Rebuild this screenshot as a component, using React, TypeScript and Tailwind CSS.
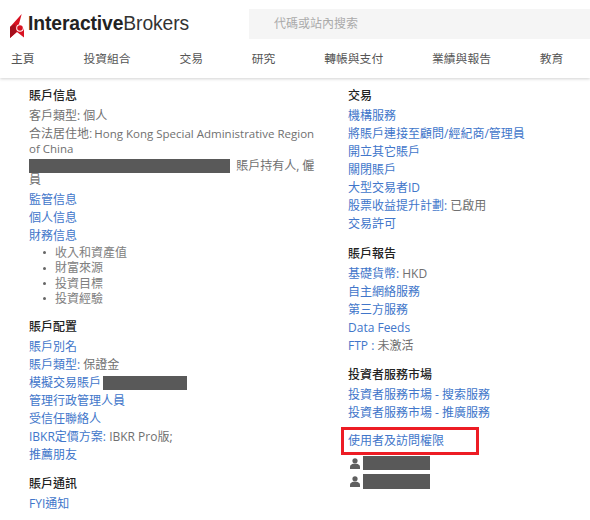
import React from 'react';

const navItems = ['主頁', '投資組合', '交易', '研究', '轉帳與支付', '業績與報告', '教育'];
const financeItems = ['收入和資產值', '財富來源', '投資目標', '投資經驗'];

const Heading = ({ children }: { children: React.ReactNode }) => (
  <h3 className="h-[20px] text-[12px] leading-[18px] font-medium text-[#222]">{children}</h3>
);

const Row = ({ children }: { children: React.ReactNode }) => (
  <div className="min-h-[18px] text-[12px] leading-[18px] text-[#707070]">{children}</div>
);

const Link = ({ children }: { children: React.ReactNode }) => (
  <a className="text-[#4176ca]">{children}</a>
);

const Redacted = ({ className }: { className: string }) => (
  <span className={`inline-block bg-[#595959] ${className}`}></span>
);

const PersonIcon = () => (
  <svg width="10" height="11" viewBox="0 0 10 11" className="mr-[3px] ml-[2px] shrink-0">
    <circle cx="5" cy="2.8" r="2.6" fill="#5f5f5f" />
    <path d="M0 11 V8.6 C0 7 2 6 3.4 5.8 H6.6 C8 6 10 7 10 8.6 V11 Z" fill="#5f5f5f" />
  </svg>
);

const App: React.FC = () => {
  return (
    <div className="h-[520px] w-[590px] overflow-hidden bg-white font-['Open_Sans','Noto_Sans_CJK_TC',sans-serif]">
      {/* Header */}
      <div className="h-[78px] shadow-[0_1px_3px_rgba(0,0,0,0.18)]">
        <div className="flex h-[48px] items-start pt-[9px]">
          <div className="flex h-[30px] w-[249px] items-center pl-[10px]">
            <svg width="14" height="24" viewBox="0 0 14 24" className="mt-[4px] shrink-0">
              <path d="M11.7 0 L0 13 V24 L7 18 L14 23.5 V15 L9 10 Z" fill="#d81222" />
              <path d="M0 13 L5 10 L6.5 18 L0 24 Z" fill="#a50f1c" />
              <circle cx="10" cy="14" r="3.8" fill="#fff" />
              <circle cx="10" cy="14" r="2.8" fill="#d81222" />
            </svg>
            <span className="ml-[4px] font-['Liberation_Sans',sans-serif] text-[19.3px] leading-none tracking-[-0.1px] text-[#333]">
              <b className="text-[#222]">Interactive</b>Brokers
            </span>
          </div>
          <div className="flex h-[30px] flex-1 items-center bg-[#f5f5f5] pl-[25px] text-[12px] text-[#aaa]">
            代碼或站內搜索
          </div>
        </div>
        <nav className="flex gap-[48.8px] pl-[11px] pt-[1px] text-[11.8px] leading-[18px] text-[#555]">
          {navItems.map(item => (
            <span key={item}>{item}</span>
          ))}
        </nav>
      </div>

      {/* Body */}
      <div className="flex pl-[29px] pt-[9px]">
        <div className="w-[319px] pr-[28px]">
          <Heading>賬戶信息</Heading>
          <Row>客戶類型: 個人</Row>
          <div className="mt-[2px] text-[11.5px] leading-[14px] whitespace-nowrap text-[#707070]">
            <div className="flex items-baseline gap-[2px]">
              <span className="font-['Liberation_Sans','Noto_Sans_CJK_TC',sans-serif] text-[12px]">合法居住地:</span>
              <span>Hong Kong Special Administrative Region</span>
            </div>
            <div className="mt-[1px]">of China</div>
          </div>
          <div className="mt-[3px] text-[12px] leading-[14px] text-[#707070]">
            <Redacted className="h-[14px] w-[201px] align-top" /> <span className="ml-[3px]">賬戶持有人, 僱員</span>
          </div>
          <div className="mt-[4px]">
            <Row><Link>監管信息</Link></Row>
            <Row><Link>個人信息</Link></Row>
            <Row><Link>財務信息</Link></Row>
          </div>
          <ul className="text-[12px] leading-[15.4px] text-[#808080]">
            {financeItems.map(item => (
              <li key={item} className="flex items-center">
                <span className="mr-[9px] ml-[14px] h-[3px] w-[3px] rounded-full bg-[#666]"></span>
                {item}
              </li>
            ))}
          </ul>

          <div className="mt-[11px]">
            <Heading>賬戶配置</Heading>
          </div>
          <Row><Link>賬戶別名</Link></Row>
          <Row><Link>賬戶類型:</Link> 保證金</Row>
          <div className="flex h-[18px] items-center text-[12px]">
            <Link>模擬交易賬戶</Link>
            <Redacted className="ml-[2px] h-[14px] w-[84px]" />
          </div>
          <Row><Link>管理行政管理人員</Link></Row>
          <Row><Link>受信任聯絡人</Link></Row>
          <Row><Link>IBKR定價方案:</Link> IBKR Pro版;</Row>
          <Row><Link>推薦朋友</Link></Row>

          <div className="mt-[11px]">
            <Heading>賬戶通訊</Heading>
          </div>
          <Row><Link>FYI通知</Link></Row>
        </div>

        <div className="flex-1">
          <Heading>交易</Heading>
          <Row><Link>機構服務</Link></Row>
          <Row><Link>將賬戶連接至顧問/經紀商/管理員</Link></Row>
          <Row><Link>開立其它賬戶</Link></Row>
          <Row><Link>關閉賬戶</Link></Row>
          <Row><Link>大型交易者ID</Link></Row>
          <Row><Link>股票收益提升計劃:</Link> 已啟用</Row>
          <Row><Link>交易許可</Link></Row>

          <div className="mt-[12px]">
            <Heading>賬戶報告</Heading>
          </div>
          <Row><Link>基礎貨幣:</Link> HKD</Row>
          <Row><Link>自主網絡服務</Link></Row>
          <Row><Link>第三方服務</Link></Row>
          <Row><Link>Data Feeds</Link></Row>
          <Row><Link>FTP :</Link> 未激活</Row>

          <div className="mt-[11px]">
            <Heading>投資者服務市場</Heading>
          </div>
          <Row><Link>投資者服務市場 - 搜索服務</Link></Row>
          <Row><Link>投資者服務市場 - 推廣服務</Link></Row>

          <div className="mt-[5px] -ml-[7px] flex h-[28px] w-[138px] items-center border-[3px] border-[#ed1c24] pl-[4px] text-[12px]">
            <Link>使用者及訪問權限</Link>
          </div>
          <div className="flex h-[16px] items-center">
            <PersonIcon />
            <Redacted className="h-[14px] w-[67px]" />
          </div>
          <div className="mt-[2px] flex h-[17px] items-center">
            <PersonIcon />
            <Redacted className="h-[15px] w-[67px]" />
          </div>
        </div>
      </div>
    </div>
  );
};

export default App;
